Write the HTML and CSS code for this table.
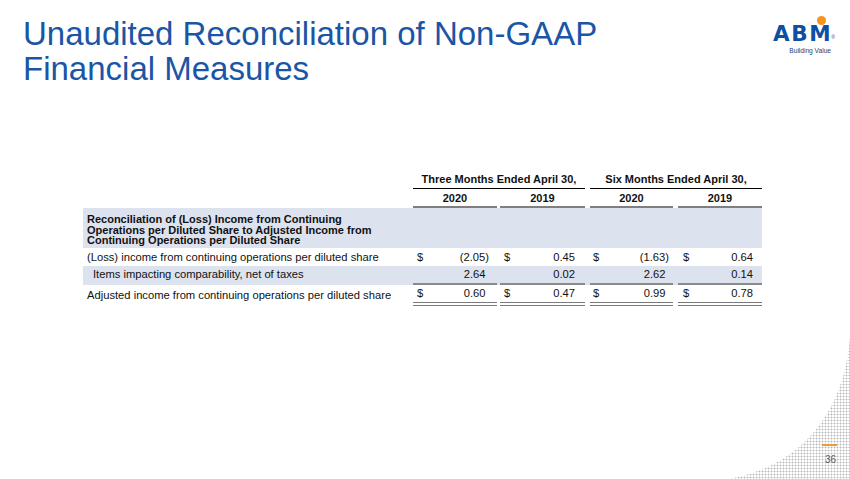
FILE: index.html
```html
<!DOCTYPE html>
<html>
<head>
<meta charset="utf-8">
<link rel="stylesheet" href="styles.css">
</head>
<body>
<div class="slide">
  <svg class="corner" width="120" height="150" viewBox="730 329 120 150" aria-hidden="true">
    <defs>
      <pattern id="dots" width="3" height="3" patternUnits="userSpaceOnUse">
        <rect x="0" y="0" width="3" height="1" fill="#e3e3e3"/>
        <rect x="0" y="0" width="1" height="3" fill="#e3e3e3"/>
        <rect x="0" y="0" width="1" height="1" fill="#b8b8b8"/>
      </pattern>
    </defs>
    <path d="M850,336 C846,400 812,458 742,476 L730,479 L850,479 Z" fill="url(#dots)"/>
  </svg>

  <header class="header">
    <h1 class="title">Unaudited Reconciliation of Non-GAAP<br>Financial Measures</h1>
    <div class="logo">
      <div class="logo-mark"><span class="abm">ABM</span><span class="logo-dot"></span><span class="reg">®</span></div>
      <div class="tagline">Building Value</div>
    </div>
  </header>

  <section class="table">
    <div class="row head1">
      <div></div>
      <div class="span2"><div class="hline">Three Months Ended April 30,</div></div>
      <div class="span2 last"><div class="hline">Six Months Ended April 30,</div></div>
    </div>
    <div class="row head2">
      <div></div>
      <div class="c c1"><div class="yline">2020</div></div>
      <div class="c c2"><div class="yline">2019</div></div>
      <div class="c c3"><div class="yline">2020</div></div>
      <div class="c c4"><div class="yline">2019</div></div>
    </div>
    <div class="row section shaded">
      <div class="label bold">Reconciliation of (Loss) Income from Continuing<br>Operations per Diluted Share to Adjusted Income from<br>Continuing Operations per Diluted Share</div>
    </div>
    <div class="row r1">
      <div class="label">(Loss) income from continuing operations per diluted share</div>
      <div class="c c1"><div class="num"><span>$</span><span class="v">(2.05)</span></div></div>
      <div class="c c2"><div class="num"><span>$</span><span class="v">0.45</span></div></div>
      <div class="c c3"><div class="num"><span>$</span><span class="v">(1.63)</span></div></div>
      <div class="c c4"><div class="num"><span>$</span><span class="v">0.64</span></div></div>
    </div>
    <div class="row r2 shaded">
      <div class="label indent">Items impacting comparability, net of taxes</div>
      <div class="c c1"><div class="num"><span></span><span class="v pos">2.64</span></div></div>
      <div class="c c2"><div class="num"><span></span><span class="v">0.02</span></div></div>
      <div class="c c3"><div class="num"><span></span><span class="v pos">2.62</span></div></div>
      <div class="c c4"><div class="num"><span></span><span class="v">0.14</span></div></div>
    </div>
    <div class="row r3">
      <div class="label">Adjusted income from continuing operations per diluted share</div>
      <div class="c c1"><div class="num total"><span>$</span><span class="v pos">0.60</span></div></div>
      <div class="c c2"><div class="num total"><span>$</span><span class="v">0.47</span></div></div>
      <div class="c c3"><div class="num total"><span>$</span><span class="v pos">0.99</span></div></div>
      <div class="c c4"><div class="num total"><span>$</span><span class="v">0.78</span></div></div>
    </div>
  </section>

  <footer class="pagenum">
    <div class="accent"></div>
    <div class="num-text">36</div>
  </footer>
</div>
</body>
</html>
```

FILE: styles.css
```css
html, body {
  margin: 0;
  padding: 0;
  background: #ffffff;
}

.slide {
  position: relative;
  width: 850px;
  height: 479px;
  overflow: hidden;
  background: #ffffff;
  font-family: "Liberation Sans", Arial, sans-serif;
  color: #1a1a1a;
}

.corner {
  position: absolute;
  right: 0;
  bottom: 0;
}

/* Header */
.header {
  display: flex;
  justify-content: space-between;
  align-items: flex-start;
  padding: 16px 15px 0 23px;
}

.title {
  margin: 0;
  font-weight: normal;
  font-size: 33px;
  line-height: 35px;
  color: #1a55a6;
}

.logo {
  display: flex;
  flex-direction: column;
  align-items: flex-end;
  margin-top: 1px;
}

.logo-mark {
  position: relative;
  display: flex;
  align-items: flex-end;
}

.abm {
  font-family: "DejaVu Sans", sans-serif;
  font-weight: bold;
  font-size: 21.5px;
  line-height: 22px;
  letter-spacing: 1.6px;
  color: #0d4fa3;
  padding-top: 6px;
}

.logo-dot {
  position: absolute;
  width: 9px;
  height: 9px;
  border-radius: 50%;
  background: #f7941d;
  right: 9px;
  top: -1px;
}

.reg {
  font-size: 5px;
  line-height: 5px;
  color: #0d4fa3;
  margin-bottom: 5px;
  margin-left: -1px;
}

.tagline {
  font-size: 6.6px;
  line-height: 9px;
  color: #1c3f7a;
  margin-right: 4px;
  margin-top: 1px;
}

/* Table */
.table {
  margin: 87px 0 0 83px;
  width: 679px;
  font-size: 11.2px;
  color: #111111;
}

.row {
  display: grid;
  grid-template-columns: 330px 87px 90px 88px 84px;
}

.shaded {
  background: #dde2ef;
}

.span2 {
  grid-column: span 2;
  padding-right: 5px;
}

.span2.last {
  padding-right: 0;
}

.hline {
  font-weight: bold;
  font-size: 11px;
  line-height: 13px;
  text-align: center;
  padding-bottom: 2px;
  border-bottom: 1px solid #000000;
}

.head2 .c {
  padding-top: 3px;
}

.yline {
  font-weight: bold;
  font-size: 11px;
  line-height: 13px;
  text-align: center;
  padding-bottom: 1px;
  border-bottom: 2px solid #7f7f7f;
}

.c1 { padding-right: 3px; }
.c2 { padding-right: 5px; }
.c3 { padding-right: 5px; }
.c4 { padding-right: 0; }

.section {
  padding: 6px 0 2.5px;
}

.section .label {
  grid-column: 1 / -1;
  font-size: 11px;
  line-height: 10.5px;
}

.bold {
  font-weight: bold;
}

.label {
  padding-left: 4px;
  white-space: nowrap;
}

.indent {
  padding-left: 10px;
}

.r1 { line-height: 18px; }
.r2 { line-height: 17px; }
.r3 { line-height: 16px; }

.r3 .label {
  padding-top: 2px;
}

.num {
  display: flex;
  justify-content: space-between;
  padding-left: 4px;
}

.c1 .num { padding-right: 8px; }
.c2 .num { padding-right: 10px; }
.c3 .num { padding-left: 3px; padding-right: 4px; }
.c4 .num { padding-left: 5px; padding-right: 9px; }

.v.pos {
  padding-right: 3.5px;
}

.r2 .num {
  border-bottom: 2px solid #8a8a8a;
}

.num.total {
  padding-bottom: 1px;
  border-bottom: 4px double #7a7a7a;
}

/* Page number */
.pagenum {
  position: absolute;
  left: 822px;
  top: 444px;
  width: 15px;
  display: flex;
  flex-direction: column;
  align-items: flex-start;
}

.accent {
  width: 15px;
  height: 1.5px;
  background: #e89a45;
}

.num-text {
  font-size: 10px;
  line-height: 12px;
  color: #5a5a5a;
  margin-top: 8px;
  padding-left: 3px;
}
```
